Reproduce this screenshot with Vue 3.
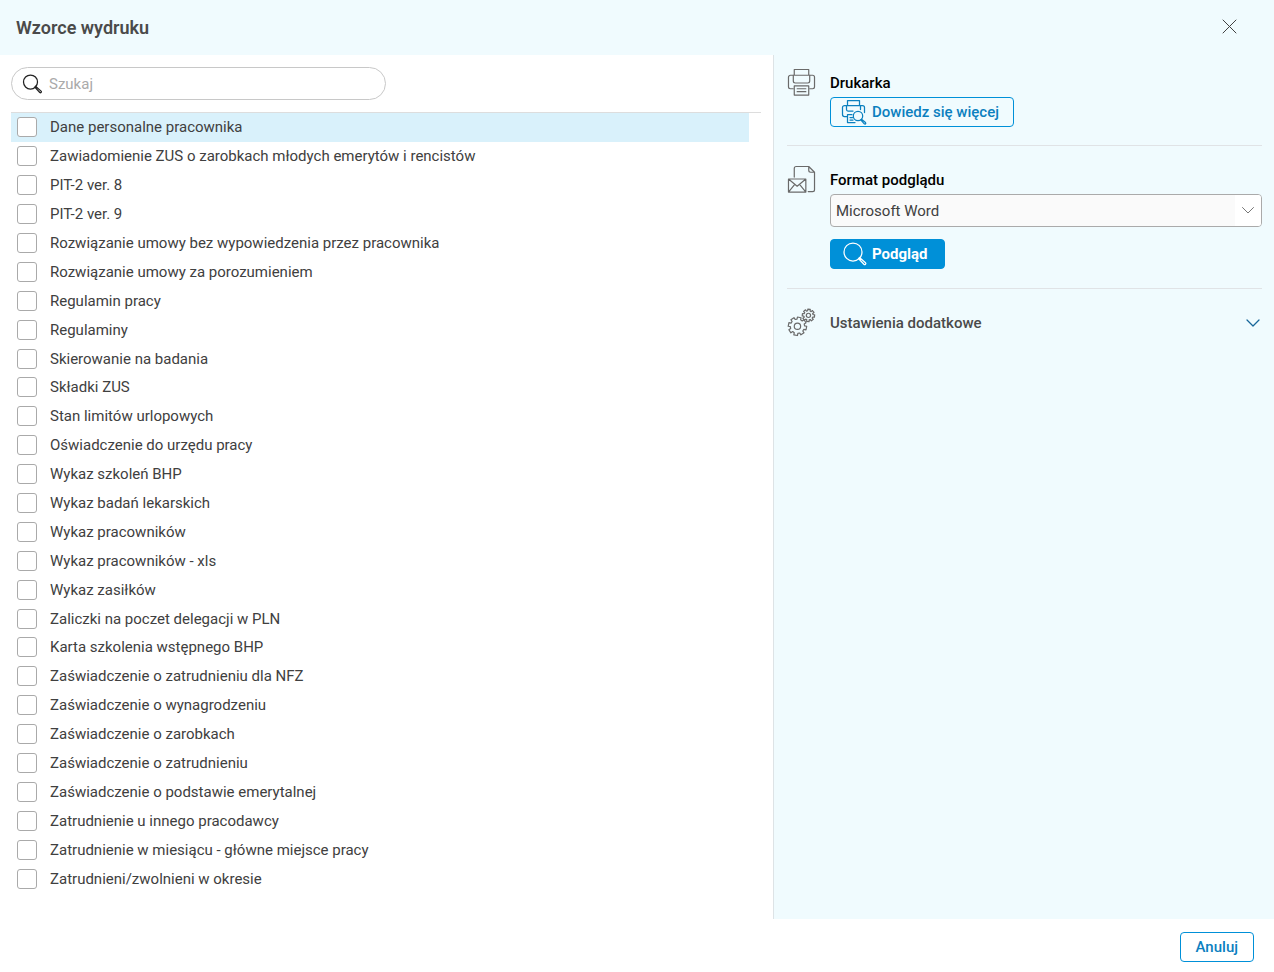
<script setup>
import { ref, computed } from 'vue'

const templates = [
  'Dane personalne pracownika',
  'Zawiadomienie ZUS o zarobkach młodych emerytów i rencistów',
  'PIT-2 ver. 8',
  'PIT-2 ver. 9',
  'Rozwiązanie umowy bez wypowiedzenia przez pracownika',
  'Rozwiązanie umowy za porozumieniem',
  'Regulamin pracy',
  'Regulaminy',
  'Skierowanie na badania',
  'Składki ZUS',
  'Stan limitów urlopowych',
  'Oświadczenie do urzędu pracy',
  'Wykaz szkoleń BHP',
  'Wykaz badań lekarskich',
  'Wykaz pracowników',
  'Wykaz pracowników - xls',
  'Wykaz zasiłków',
  'Zaliczki na poczet delegacji w PLN',
  'Karta szkolenia wstępnego BHP',
  'Zaświadczenie o zatrudnieniu dla NFZ',
  'Zaświadczenie o wynagrodzeniu',
  'Zaświadczenie o zarobkach',
  'Zaświadczenie o zatrudnieniu',
  'Zaświadczenie o podstawie emerytalnej',
  'Zatrudnienie u innego pracodawcy',
  'Zatrudnienie w miesiącu - główne miejsce pracy',
  'Zatrudnieni/zwolnieni w okresie',
]

const query = ref('')
const checked = ref([])
const active = ref(templates[0])
const format = ref('Microsoft Word')
const visible = computed(() =>
  templates.filter((name) => name.toLowerCase().includes(query.value.toLowerCase())),
)

// Outline of a gear with eight square teeth around (cx, cy).
function gear(cx, cy, inner, outer, turn) {
  const points = []
  for (let i = 0; i < 8; i++) {
    const mid = turn + (i * Math.PI) / 4
    for (const [r, a] of [[inner, -0.26], [outer, -0.2], [outer, 0.2], [inner, 0.26]]) {
      points.push(`${(cx + r * Math.cos(mid + a)).toFixed(2)} ${(cy + r * Math.sin(mid + a)).toFixed(2)}`)
    }
  }
  return `M${points.join('L')}Z`
}
const bigGear = gear(9.8, 17.9, 7.4, 9.6, 0.2)
const smallGear = gear(21.2, 6.6, 4.8, 6.5, 0.1)
</script>

<template>
  <div class="dialog" role="dialog" aria-labelledby="dialog-title">
    <header class="header">
      <h1 id="dialog-title">Wzorce wydruku</h1>
      <button class="close" type="button" aria-label="Zamknij">
        <svg class="thin" width="15" height="15" viewBox="0 0 15 15"><path d="M1 1l13 13M14 1L1 14" /></svg>
      </button>
    </header>

    <main class="body">
      <section class="templates">
        <label class="search">
          <svg width="20" height="20" viewBox="0 0 20 20">
            <circle cx="8.500" cy="8" r="7" />
            <path d="M13.500 12.200l5.600 4.900c.9.8-.3 2.200-1.300 1.400l-5-5.400M13.100 12.600l1.400 1.400" />
          </svg>
          <input v-model="query" type="text" placeholder="Szukaj" aria-label="Szukaj" />
        </label>
        <ul class="list">
          <li v-for="name in visible" :key="name" :class="{ active: name === active }">
            <label @click="active = name">
              <input v-model="checked" type="checkbox" :value="name" />
              <span>{{ name }}</span>
            </label>
          </li>
        </ul>
      </section>

      <aside class="options">
        <section class="group">
          <svg class="icon" viewBox="0 0 28 28">
            <path d="M6.5 6.500v-6h15v6M5.500 20.500h-3a2 2 0 0 1-2-2v-10a2 2 0 0 1 2-2h23a2 2 0 0 1 2 2v10a2 2 0 0 1-2 2h-3" />
            <path d="M5.500 6.500v6a2 2 0 0 0 2 2h13a2 2 0 0 0 2-2v-6M6.500 17.500h15v9.500h-15zM9.500 20.500h9M9.500 23.500h9" />
          </svg>
          <div class="content">
            <h2>Drukarka</h2>
            <button class="button outline" type="button">
              <svg width="25" height="25" viewBox="0 0 25 25">
                <path d="M5.500 5.500v-5h12v5M5.500 16.500h-3a2 2 0 0 1-2-2v-7a2 2 0 0 1 2-2h18a2 2 0 0 1 2 2v5M4.500 5.500v4a1.500 1.500 0 0 0 1.500 1.500h5M18.500 5.500v4M10 14.500H5.500v8H13M8 17.500h2.500M8 20h3" />
                <circle cx="16" cy="16" r="4.700" />
                <path d="M19.500 19.200l4 3.400c.8.8-.3 2-1.200 1.200l-3.500-4" />
              </svg>
              Dowiedz się więcej
            </button>
          </div>
        </section>

        <section class="group">
          <svg class="icon" viewBox="0 0 28 28">
            <path d="M6.500 11.500v-9a2 2 0 0 1 2-2h13l6 6v18a2 2 0 0 1-2 2H21M21.500.5v4a2 2 0 0 0 2 2h4" />
            <path d="M.5 13.500h18v13.500H.5zM.5 13.500l9 7.500 9-7.500M.5 27l6.500-8M18.500 27L12 19" />
          </svg>
          <div class="content">
            <h2><label for="format">Format podglądu</label></h2>
            <div class="select">
              <select id="format" v-model="format">
                <option>Microsoft Word</option>
                <option>PDF</option>
              </select>
              <span class="arrow">
                <svg class="thin" width="12" height="7" viewBox="0 0 12 7"><path d="M.5.5L6 6 11.500.5" /></svg>
              </span>
            </div>
            <button class="button primary" type="button">
              <svg width="24" height="24" viewBox="0 0 24 24">
                <circle cx="10" cy="10" r="9" />
                <path d="M16.500 15.500l6 5.200c1 1-.5 2.600-1.600 1.600l-5.400-5.800M16 16l1.500 1.500" />
              </svg>
              Podgląd
            </button>
          </div>
        </section>

        <button class="group more" type="button" aria-expanded="false">
          <svg class="icon" viewBox="0 0 28 28">
            <path :d="bigGear" />
            <circle cx="9.800" cy="17.900" r="3.300" />
            <path :d="smallGear" />
            <circle cx="21.200" cy="6.600" r="2.200" />
          </svg>
          <span>Ustawienia dodatkowe</span>
          <svg class="chevron" width="14" height="8" viewBox="0 0 14 8"><path d="M1 1l6 6 6-6" /></svg>
        </button>
      </aside>
    </main>

    <footer class="footer">
      <button class="button outline" type="button">Anuluj</button>
    </footer>
  </div>
</template>

<style>
body {
  margin: 0;
  background: #fff;
}
</style>

<style scoped>
.dialog {
  display: flex;
  flex-direction: column;
  min-height: 100vh;
  color: #404040;
  font: 15px/20px Roboto, sans-serif;
}
.dialog * {
  box-sizing: border-box;
}
svg {
  display: block;
  flex: none;
  overflow: visible;
  fill: none;
  stroke: currentColor;
  stroke-width: 1.25;
  stroke-linecap: round;
  stroke-linejoin: round;
}
.thin {
  stroke-width: 1;
}
button {
  font: inherit;
  color: inherit;
  background: none;
  border: 0;
  padding: 0;
  cursor: pointer;
}
.header {
  display: flex;
  align-items: center;
  justify-content: space-between;
  height: 55px;
  padding: 0 31px 0 16px;
  background: #f0fbfe;
}
h1 {
  margin: 0;
  color: #4a4a4a;
  font-size: 18px;
  font-weight: 600;
}
.close {
  padding: 5px 6px 7px;
}
.body {
  display: grid;
  flex: 1;
  grid-template-columns: minmax(0, 1fr) 501px;
}
.templates {
  display: flex;
  flex-direction: column;
  padding: 12px 12px 26px 11px;
}
.search {
  display: flex;
  align-items: center;
  gap: 7px;
  width: 375px;
  height: 33px;
  padding: 0 10px;
  border: 1px solid #c8c8c8;
  border-radius: 17px;
  color: #222;
}
.search input {
  flex: 1;
  min-width: 0;
  padding: 0;
  border: 0;
  outline: 0;
  background: none;
  font: inherit;
}
.search input::placeholder {
  color: #aaa;
  opacity: 1;
}
.list {
  display: grid;
  flex: 1;
  grid-auto-rows: 1fr;
  margin: 12px 0 0;
  padding: 0;
  border-top: 1px solid #ddd;
  list-style: none;
}
.list li {
  margin-right: 12px;
}
.list .active {
  background: #d9f1fb;
}
.list label {
  display: flex;
  align-items: center;
  gap: 13px;
  height: 100%;
  padding-left: 6px;
}
.list input {
  appearance: none;
  width: 20px;
  height: 20px;
  margin: 0;
  border: 1px solid #aaa;
  border-radius: 3px;
  background: #fff;
}
.list input:checked {
  background: #0090d8;
}
.options {
  padding: 0 12px 0 13px;
  border-left: 1px solid #dde3e6;
  background: #f0fbfe;
}
.group {
  display: flex;
  gap: 15px;
  padding: 14px 0 18px;
}
.group + .group {
  border-top: 1px solid #e0e3e6;
  padding: 20px 0 19px;
}
.icon {
  width: 27px;
  height: 27px;
  margin-left: 1px;
  color: #6a6a6a;
}
.content {
  flex: 1;
  padding-top: 4px;
}
h2 {
  margin: 0 0 4px;
  color: #000;
  font-size: 15px;
  font-weight: 500;
}
.button {
  display: flex;
  align-items: center;
  gap: 5px;
  height: 30px;
  padding: 0 14px 0 11px;
  border: 1px solid #0090d8;
  border-radius: 4px;
  font-weight: 500;
}
.outline {
  color: #0b80bf;
}
.primary {
  margin-top: 12px;
  padding: 0 16px 0 12px;
  background: #0090d8;
  color: #fff;
  font-weight: 700;
}
.select {
  position: relative;
}
select {
  display: block;
  appearance: none;
  width: 100%;
  height: 33px;
  padding: 0 32px 0 5px;
  border: 1px solid #aaa;
  border-radius: 4px;
  background: #fafafa;
  color: #404040;
  font: inherit;
}
.arrow {
  position: absolute;
  inset: 1px 1px 1px auto;
  display: grid;
  place-items: center;
  width: 26px;
  border-radius: 0 3px 3px 0;
  background: #fff;
  color: #777;
  pointer-events: none;
}
.more {
  align-items: center;
  width: 100%;
  color: #4a4a4a;
  font-weight: 500;
  text-align: left;
}
.chevron {
  margin-left: auto;
  margin-right: 2px;
  color: #17669a;
}
.footer {
  display: flex;
  align-items: center;
  justify-content: flex-end;
  height: 53px;
  padding: 2px 20px 0;
  background: #fff;
}
.footer .button {
  padding: 0 15px;
}
</style>
